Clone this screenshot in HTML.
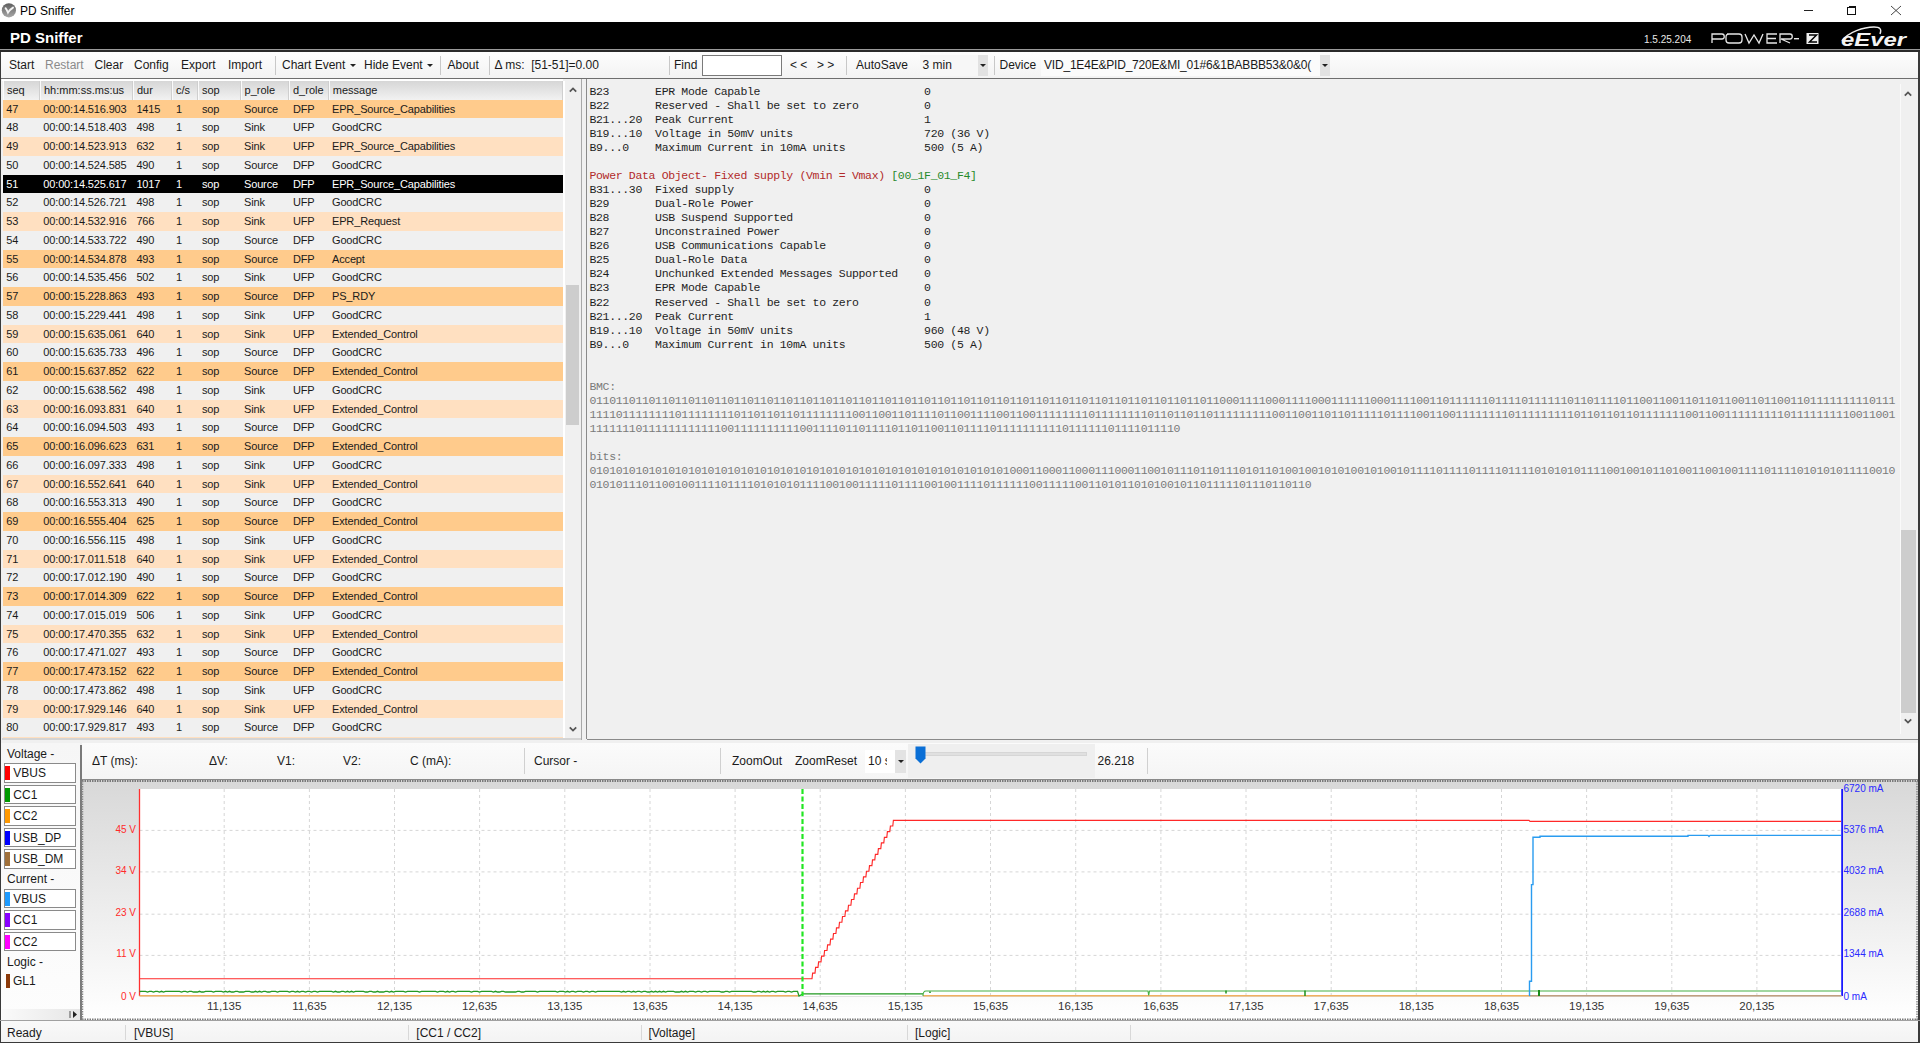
<!DOCTYPE html>
<html><head><meta charset="utf-8"><title>PD Sniffer</title>
<style>
*{margin:0;padding:0;box-sizing:border-box}
html,body{width:1920px;height:1043px;overflow:hidden;background:#f0f0f0;font-family:"Liberation Sans",sans-serif;color:#000}
.abs{position:absolute}
.t{position:absolute;white-space:pre;line-height:1}
#titlebar{position:absolute;left:0;top:0;width:1920px;height:22px;background:#fff}
#hdr{position:absolute;left:0;top:22px;width:1920px;height:27px;background:#000}
#tb{position:absolute;left:1px;top:52px;width:1917px;height:26px;background:linear-gradient(#fdfdfd,#f3f3f3)}
.tbt{position:absolute;top:58px;font-size:12px;line-height:14px;white-space:pre;color:#1a1a1a}
.sep{position:absolute;width:1px;background:#c8c8c8}
.row{position:absolute;left:3px;width:560px;height:18.75px}
.c{position:absolute;top:0;font-size:11px;line-height:18.75px;white-space:pre;color:#1a1a1a;letter-spacing:-0.15px}
.hc{position:absolute;top:81px;height:18.5px;background:linear-gradient(#d6d6d6,#f2f2f2);font-size:11px;line-height:18px;color:#1a1a1a;padding-left:3px;white-space:pre}
.mono{position:absolute;left:589.5px;font-family:"Liberation Mono",monospace;font-size:11.5px;letter-spacing:-0.34px;line-height:14.05px;white-space:pre;color:#1e1e1e}
.lg{position:absolute;left:4px;width:72px;height:19.5px;border:1px solid #8a8a8a;background:#fff}
.lgb{position:absolute;left:1.5px;top:2.5px;width:4.5px;height:13.5px}
.lgt{position:absolute;left:9px;top:0;font-size:12px;line-height:17.5px;color:#1a1a1a}
.lgh{position:absolute;left:7px;font-size:12px;line-height:14px;color:#1a1a1a}
.ctb{position:absolute;top:754px;font-size:12px;line-height:14px;white-space:pre;color:#1a1a1a}
.st{position:absolute;top:1026px;font-size:12px;line-height:14px;white-space:pre;color:#1a1a1a}
</style></head><body>

<div id="titlebar"></div>
<svg class="abs" style="left:0;top:0" width="20" height="20"><defs><linearGradient id="ig" x1="0" y1="0" x2="0" y2="1"><stop offset="0" stop-color="#5e5e5e"/><stop offset="1" stop-color="#a8a8a8"/></linearGradient></defs><circle cx="8.9" cy="10.3" r="7.1" fill="url(#ig)"/><path d="M5.6 8.2Q6.5 9 8 12.6Q10 9.5 13 7.6" fill="none" stroke="#f4f4f4" stroke-width="1.9" stroke-linecap="round"/></svg>
<div class="t" style="left:20px;top:5px;font-size:12px;color:#000">PD Sniffer</div>
<div class="abs" style="left:1804px;top:10px;width:9px;height:1px;background:#222"></div>
<div class="abs" style="left:1847px;top:7px;width:8.5px;height:8px;border:1.2px solid #111"></div>
<div class="abs" style="left:1849px;top:6px;width:7.2px;height:8px;border-top:1.2px solid #111;border-right:1.2px solid #111"></div>
<svg class="abs" style="left:1890px;top:5px" width="12" height="11"><path d="M1 1L11 10M11 1L1 10" stroke="#333" stroke-width="0.9"/></svg>
<div id="hdr"></div>
<div class="abs" style="left:0;top:49px;width:1920px;height:1px;background:#9a9a9a"></div>
<div class="abs" style="left:0;top:50px;width:1920px;height:2px;background:#2a2a2a"></div>
<div class="t" style="left:10px;top:29.5px;font-size:15px;font-weight:bold;color:#fff">PD Sniffer</div>
<div class="t" style="left:1644px;top:35px;font-size:10px;color:#e8e8e8">1.5.25.204</div>
<svg class="abs" style="left:1711px;top:32px" width="110" height="13" viewBox="0 0 110 13">
<g fill="none" stroke="#e6e6e6" stroke-width="1.3">
<path d="M1 11V2h10c3 0 3 5 0 5H1"/>
<path d="M16 2h12c2 0 3 1 3 3v3c0 2-1 3-3 3H18c-2 0-3-1-3-3V5c0-2 1-3 3-3z"/>
<path d="M34 2l4 9l5-8l5 8l4-9"/>
<path d="M66 2H56v9h10M56 6.5h9"/>
<path d="M69 11V2h10c3 0 3 5 0 5h-9l9 4"/>
</g>
<rect x="83" y="6" width="5" height="1.4" fill="#e6e6e6"/>
<rect x="95.5" y="1" width="12" height="11" fill="#f0f0f0"/>
<path d="M98 3h7.5l-7 7h7.5" fill="none" stroke="#000" stroke-width="1.5"/>
</svg>
<svg class="abs" style="left:1840px;top:25px" width="72" height="24" viewBox="0 0 72 24">
<path d="M2 16C8 7 24 2 34 2C40 2 42 4 40 9" fill="none" stroke="#eee" stroke-width="1.4"/>
<text x="1" y="21" font-family="Liberation Sans" font-style="italic" font-weight="bold" font-size="18" fill="#f4f4f4" textLength="65" lengthAdjust="spacingAndGlyphs">eEver</text>
</svg>
<div class="abs" style="left:0;top:52px;width:1px;height:991px;background:#3a3a3a"></div>
<div class="abs" style="left:1918px;top:52px;width:2px;height:991px;background:#3a3a3a"></div>
<div id="tb"></div>
<div class="abs" style="left:1px;top:78px;width:1917px;height:1px;background:#6e6e6e"></div>
<div class="tbt" style="left:9px;color:#1a1a1a;">Start</div>
<div class="tbt" style="left:45px;color:#8a8a8a;">Restart</div>
<div class="tbt" style="left:94.5px;color:#1a1a1a;">Clear</div>
<div class="tbt" style="left:134px;color:#1a1a1a;">Config</div>
<div class="tbt" style="left:181px;color:#1a1a1a;">Export</div>
<div class="tbt" style="left:228px;color:#1a1a1a;">Import</div>
<div class="tbt" style="left:282px;color:#1a1a1a;">Chart Event</div>
<div class="tbt" style="left:364px;color:#1a1a1a;">Hide Event</div>
<div class="tbt" style="left:447.5px;color:#1a1a1a;">About</div>
<div class="tbt" style="left:494.5px;color:#1a1a1a;">Δ ms:  [51-51]=0.00</div>
<div class="tbt" style="left:674px;color:#1a1a1a;">Find</div>
<div class="tbt" style="left:790px;color:#1a1a1a;">&lt; &lt;</div>
<div class="tbt" style="left:817px;color:#1a1a1a;">&gt; &gt;</div>
<div class="tbt" style="left:856px;color:#1a1a1a;">AutoSave</div>
<div class="tbt" style="left:922.5px;color:#1a1a1a;">3 min</div>
<div class="tbt" style="left:999.5px;color:#1a1a1a;">Device</div>
<div class="tbt" style="left:1044px;color:#1a1a1a; letter-spacing:-0.2px;">VID_1E4E&amp;PID_720E&amp;MI_01#6&amp;1BABBB53&amp;0&amp;0(</div>
<div class="sep" style="left:275px;top:56px;height:19px"></div>
<div class="sep" style="left:440px;top:56px;height:19px"></div>
<div class="sep" style="left:489px;top:56px;height:19px"></div>
<div class="sep" style="left:669px;top:56px;height:19px"></div>
<div class="sep" style="left:845.5px;top:56px;height:19px"></div>
<div class="sep" style="left:993.5px;top:56px;height:19px"></div>
<div class="abs" style="left:350px;top:64px;width:0;height:0;border-left:3px solid transparent;border-right:3px solid transparent;border-top:3px solid #222"></div>
<div class="abs" style="left:427px;top:64px;width:0;height:0;border-left:3px solid transparent;border-right:3px solid transparent;border-top:3px solid #222"></div>
<div class="abs" style="left:980px;top:64px;width:0;height:0;border-left:3px solid transparent;border-right:3px solid transparent;border-top:3px solid #222"></div>
<div class="abs" style="left:1322px;top:64px;width:0;height:0;border-left:3px solid transparent;border-right:3px solid transparent;border-top:3px solid #222"></div>
<div class="abs" style="left:702px;top:55px;width:80px;height:21px;background:#fff;border:1px solid #7a7a7a"></div>
<div class="abs" style="left:919.5px;top:55px;width:68px;height:21px;background:#f7f7f7"></div>
<div class="tbt" style="left:922.5px;">3 min</div>
<div class="abs" style="left:978px;top:55px;width:10px;height:21px;background:#e2e2e2"></div>
<div class="abs" style="left:980px;top:64px;width:0;height:0;border-left:3px solid transparent;border-right:3px solid transparent;border-top:3px solid #222"></div>
<div class="abs" style="left:1041px;top:55px;width:280px;height:21px;background:#fbfbfb"></div>
<div class="tbt" style="left:1044px;letter-spacing:-0.2px">VID_1E4E&amp;PID_720E&amp;MI_01#6&amp;1BABBB53&amp;0&amp;0(</div>
<div class="abs" style="left:1320px;top:55px;width:10px;height:21px;background:#e2e2e2"></div>
<div class="abs" style="left:1322px;top:64px;width:0;height:0;border-left:3px solid transparent;border-right:3px solid transparent;border-top:3px solid #222"></div>
<div class="abs" style="left:2px;top:79px;width:580px;height:661px;background:#f0f0f0"></div>
<div class="abs" style="left:2px;top:79px;width:561px;height:2px;background:#fff"></div>
<div class="hc" style="left:3px;width:37px;border-left:1px solid #fafafa;border-right:1px solid #cfcfcf">seq</div>
<div class="hc" style="left:40px;width:93px;border-left:1px solid #fafafa;border-right:1px solid #cfcfcf">hh:mm:ss.ms:us</div>
<div class="hc" style="left:133px;width:39px;border-left:1px solid #fafafa;border-right:1px solid #cfcfcf">dur</div>
<div class="hc" style="left:172px;width:26px;border-left:1px solid #fafafa;border-right:1px solid #cfcfcf">c/s</div>
<div class="hc" style="left:198px;width:42.599999999999994px;border-left:1px solid #fafafa;border-right:1px solid #cfcfcf">sop</div>
<div class="hc" style="left:240.6px;width:48.400000000000006px;border-left:1px solid #fafafa;border-right:1px solid #cfcfcf">p_role</div>
<div class="hc" style="left:289px;width:39.75px;border-left:1px solid #fafafa;border-right:1px solid #cfcfcf">d_role</div>
<div class="hc" style="left:328.75px;width:234.25px;border-left:1px solid #fafafa;border-right:1px solid #cfcfcf">message</div>
<div class="row" style="top:99.5px;height:18.75px;background:#ffcb8c;overflow:hidden">
<div class="c" style="left:3.3px;color:#1a1a1a">47</div>
<div class="c" style="left:40.3px;color:#1a1a1a">00:00:14.516.903</div>
<div class="c" style="left:133.4px;color:#1a1a1a">1415</div>
<div class="c" style="left:173px;color:#1a1a1a">1</div>
<div class="c" style="left:199px;color:#1a1a1a">sop</div>
<div class="c" style="left:241px;color:#1a1a1a">Source</div>
<div class="c" style="left:290px;color:#1a1a1a">DFP</div>
<div class="c" style="left:329px;color:#1a1a1a">EPR_Source_Capabilities</div>
</div>
<div class="row" style="top:118.25px;height:18.75px;background:#f0f0f0;overflow:hidden">
<div class="c" style="left:3.3px;color:#1a1a1a">48</div>
<div class="c" style="left:40.3px;color:#1a1a1a">00:00:14.518.403</div>
<div class="c" style="left:133.4px;color:#1a1a1a">498</div>
<div class="c" style="left:173px;color:#1a1a1a">1</div>
<div class="c" style="left:199px;color:#1a1a1a">sop</div>
<div class="c" style="left:241px;color:#1a1a1a">Sink</div>
<div class="c" style="left:290px;color:#1a1a1a">UFP</div>
<div class="c" style="left:329px;color:#1a1a1a">GoodCRC</div>
</div>
<div class="row" style="top:137.0px;height:18.75px;background:#ffe0c1;overflow:hidden">
<div class="c" style="left:3.3px;color:#1a1a1a">49</div>
<div class="c" style="left:40.3px;color:#1a1a1a">00:00:14.523.913</div>
<div class="c" style="left:133.4px;color:#1a1a1a">632</div>
<div class="c" style="left:173px;color:#1a1a1a">1</div>
<div class="c" style="left:199px;color:#1a1a1a">sop</div>
<div class="c" style="left:241px;color:#1a1a1a">Sink</div>
<div class="c" style="left:290px;color:#1a1a1a">UFP</div>
<div class="c" style="left:329px;color:#1a1a1a">EPR_Source_Capabilities</div>
</div>
<div class="row" style="top:155.75px;height:18.75px;background:#f0f0f0;overflow:hidden">
<div class="c" style="left:3.3px;color:#1a1a1a">50</div>
<div class="c" style="left:40.3px;color:#1a1a1a">00:00:14.524.585</div>
<div class="c" style="left:133.4px;color:#1a1a1a">490</div>
<div class="c" style="left:173px;color:#1a1a1a">1</div>
<div class="c" style="left:199px;color:#1a1a1a">sop</div>
<div class="c" style="left:241px;color:#1a1a1a">Source</div>
<div class="c" style="left:290px;color:#1a1a1a">DFP</div>
<div class="c" style="left:329px;color:#1a1a1a">GoodCRC</div>
</div>
<div class="row" style="top:174.5px;height:18.75px;background:#000;overflow:hidden">
<div class="c" style="left:3.3px;color:#fff">51</div>
<div class="c" style="left:40.3px;color:#fff">00:00:14.525.617</div>
<div class="c" style="left:133.4px;color:#fff">1017</div>
<div class="c" style="left:173px;color:#fff">1</div>
<div class="c" style="left:199px;color:#fff">sop</div>
<div class="c" style="left:241px;color:#fff">Source</div>
<div class="c" style="left:290px;color:#fff">DFP</div>
<div class="c" style="left:329px;color:#fff">EPR_Source_Capabilities</div>
</div>
<div class="row" style="top:193.25px;height:18.75px;background:#f0f0f0;overflow:hidden">
<div class="c" style="left:3.3px;color:#1a1a1a">52</div>
<div class="c" style="left:40.3px;color:#1a1a1a">00:00:14.526.721</div>
<div class="c" style="left:133.4px;color:#1a1a1a">498</div>
<div class="c" style="left:173px;color:#1a1a1a">1</div>
<div class="c" style="left:199px;color:#1a1a1a">sop</div>
<div class="c" style="left:241px;color:#1a1a1a">Sink</div>
<div class="c" style="left:290px;color:#1a1a1a">UFP</div>
<div class="c" style="left:329px;color:#1a1a1a">GoodCRC</div>
</div>
<div class="row" style="top:212.0px;height:18.75px;background:#ffe0c1;overflow:hidden">
<div class="c" style="left:3.3px;color:#1a1a1a">53</div>
<div class="c" style="left:40.3px;color:#1a1a1a">00:00:14.532.916</div>
<div class="c" style="left:133.4px;color:#1a1a1a">766</div>
<div class="c" style="left:173px;color:#1a1a1a">1</div>
<div class="c" style="left:199px;color:#1a1a1a">sop</div>
<div class="c" style="left:241px;color:#1a1a1a">Sink</div>
<div class="c" style="left:290px;color:#1a1a1a">UFP</div>
<div class="c" style="left:329px;color:#1a1a1a">EPR_Request</div>
</div>
<div class="row" style="top:230.75px;height:18.75px;background:#f0f0f0;overflow:hidden">
<div class="c" style="left:3.3px;color:#1a1a1a">54</div>
<div class="c" style="left:40.3px;color:#1a1a1a">00:00:14.533.722</div>
<div class="c" style="left:133.4px;color:#1a1a1a">490</div>
<div class="c" style="left:173px;color:#1a1a1a">1</div>
<div class="c" style="left:199px;color:#1a1a1a">sop</div>
<div class="c" style="left:241px;color:#1a1a1a">Source</div>
<div class="c" style="left:290px;color:#1a1a1a">DFP</div>
<div class="c" style="left:329px;color:#1a1a1a">GoodCRC</div>
</div>
<div class="row" style="top:249.5px;height:18.75px;background:#ffcb8c;overflow:hidden">
<div class="c" style="left:3.3px;color:#1a1a1a">55</div>
<div class="c" style="left:40.3px;color:#1a1a1a">00:00:14.534.878</div>
<div class="c" style="left:133.4px;color:#1a1a1a">493</div>
<div class="c" style="left:173px;color:#1a1a1a">1</div>
<div class="c" style="left:199px;color:#1a1a1a">sop</div>
<div class="c" style="left:241px;color:#1a1a1a">Source</div>
<div class="c" style="left:290px;color:#1a1a1a">DFP</div>
<div class="c" style="left:329px;color:#1a1a1a">Accept</div>
</div>
<div class="row" style="top:268.25px;height:18.75px;background:#f0f0f0;overflow:hidden">
<div class="c" style="left:3.3px;color:#1a1a1a">56</div>
<div class="c" style="left:40.3px;color:#1a1a1a">00:00:14.535.456</div>
<div class="c" style="left:133.4px;color:#1a1a1a">502</div>
<div class="c" style="left:173px;color:#1a1a1a">1</div>
<div class="c" style="left:199px;color:#1a1a1a">sop</div>
<div class="c" style="left:241px;color:#1a1a1a">Sink</div>
<div class="c" style="left:290px;color:#1a1a1a">UFP</div>
<div class="c" style="left:329px;color:#1a1a1a">GoodCRC</div>
</div>
<div class="row" style="top:287.0px;height:18.75px;background:#ffcb8c;overflow:hidden">
<div class="c" style="left:3.3px;color:#1a1a1a">57</div>
<div class="c" style="left:40.3px;color:#1a1a1a">00:00:15.228.863</div>
<div class="c" style="left:133.4px;color:#1a1a1a">493</div>
<div class="c" style="left:173px;color:#1a1a1a">1</div>
<div class="c" style="left:199px;color:#1a1a1a">sop</div>
<div class="c" style="left:241px;color:#1a1a1a">Source</div>
<div class="c" style="left:290px;color:#1a1a1a">DFP</div>
<div class="c" style="left:329px;color:#1a1a1a">PS_RDY</div>
</div>
<div class="row" style="top:305.75px;height:18.75px;background:#f0f0f0;overflow:hidden">
<div class="c" style="left:3.3px;color:#1a1a1a">58</div>
<div class="c" style="left:40.3px;color:#1a1a1a">00:00:15.229.441</div>
<div class="c" style="left:133.4px;color:#1a1a1a">498</div>
<div class="c" style="left:173px;color:#1a1a1a">1</div>
<div class="c" style="left:199px;color:#1a1a1a">sop</div>
<div class="c" style="left:241px;color:#1a1a1a">Sink</div>
<div class="c" style="left:290px;color:#1a1a1a">UFP</div>
<div class="c" style="left:329px;color:#1a1a1a">GoodCRC</div>
</div>
<div class="row" style="top:324.5px;height:18.75px;background:#ffe0c1;overflow:hidden">
<div class="c" style="left:3.3px;color:#1a1a1a">59</div>
<div class="c" style="left:40.3px;color:#1a1a1a">00:00:15.635.061</div>
<div class="c" style="left:133.4px;color:#1a1a1a">640</div>
<div class="c" style="left:173px;color:#1a1a1a">1</div>
<div class="c" style="left:199px;color:#1a1a1a">sop</div>
<div class="c" style="left:241px;color:#1a1a1a">Sink</div>
<div class="c" style="left:290px;color:#1a1a1a">UFP</div>
<div class="c" style="left:329px;color:#1a1a1a">Extended_Control</div>
</div>
<div class="row" style="top:343.25px;height:18.75px;background:#f0f0f0;overflow:hidden">
<div class="c" style="left:3.3px;color:#1a1a1a">60</div>
<div class="c" style="left:40.3px;color:#1a1a1a">00:00:15.635.733</div>
<div class="c" style="left:133.4px;color:#1a1a1a">496</div>
<div class="c" style="left:173px;color:#1a1a1a">1</div>
<div class="c" style="left:199px;color:#1a1a1a">sop</div>
<div class="c" style="left:241px;color:#1a1a1a">Source</div>
<div class="c" style="left:290px;color:#1a1a1a">DFP</div>
<div class="c" style="left:329px;color:#1a1a1a">GoodCRC</div>
</div>
<div class="row" style="top:362.0px;height:18.75px;background:#ffcb8c;overflow:hidden">
<div class="c" style="left:3.3px;color:#1a1a1a">61</div>
<div class="c" style="left:40.3px;color:#1a1a1a">00:00:15.637.852</div>
<div class="c" style="left:133.4px;color:#1a1a1a">622</div>
<div class="c" style="left:173px;color:#1a1a1a">1</div>
<div class="c" style="left:199px;color:#1a1a1a">sop</div>
<div class="c" style="left:241px;color:#1a1a1a">Source</div>
<div class="c" style="left:290px;color:#1a1a1a">DFP</div>
<div class="c" style="left:329px;color:#1a1a1a">Extended_Control</div>
</div>
<div class="row" style="top:380.75px;height:18.75px;background:#f0f0f0;overflow:hidden">
<div class="c" style="left:3.3px;color:#1a1a1a">62</div>
<div class="c" style="left:40.3px;color:#1a1a1a">00:00:15.638.562</div>
<div class="c" style="left:133.4px;color:#1a1a1a">498</div>
<div class="c" style="left:173px;color:#1a1a1a">1</div>
<div class="c" style="left:199px;color:#1a1a1a">sop</div>
<div class="c" style="left:241px;color:#1a1a1a">Sink</div>
<div class="c" style="left:290px;color:#1a1a1a">UFP</div>
<div class="c" style="left:329px;color:#1a1a1a">GoodCRC</div>
</div>
<div class="row" style="top:399.5px;height:18.75px;background:#ffe0c1;overflow:hidden">
<div class="c" style="left:3.3px;color:#1a1a1a">63</div>
<div class="c" style="left:40.3px;color:#1a1a1a">00:00:16.093.831</div>
<div class="c" style="left:133.4px;color:#1a1a1a">640</div>
<div class="c" style="left:173px;color:#1a1a1a">1</div>
<div class="c" style="left:199px;color:#1a1a1a">sop</div>
<div class="c" style="left:241px;color:#1a1a1a">Sink</div>
<div class="c" style="left:290px;color:#1a1a1a">UFP</div>
<div class="c" style="left:329px;color:#1a1a1a">Extended_Control</div>
</div>
<div class="row" style="top:418.25px;height:18.75px;background:#f0f0f0;overflow:hidden">
<div class="c" style="left:3.3px;color:#1a1a1a">64</div>
<div class="c" style="left:40.3px;color:#1a1a1a">00:00:16.094.503</div>
<div class="c" style="left:133.4px;color:#1a1a1a">493</div>
<div class="c" style="left:173px;color:#1a1a1a">1</div>
<div class="c" style="left:199px;color:#1a1a1a">sop</div>
<div class="c" style="left:241px;color:#1a1a1a">Source</div>
<div class="c" style="left:290px;color:#1a1a1a">DFP</div>
<div class="c" style="left:329px;color:#1a1a1a">GoodCRC</div>
</div>
<div class="row" style="top:437.0px;height:18.75px;background:#ffcb8c;overflow:hidden">
<div class="c" style="left:3.3px;color:#1a1a1a">65</div>
<div class="c" style="left:40.3px;color:#1a1a1a">00:00:16.096.623</div>
<div class="c" style="left:133.4px;color:#1a1a1a">631</div>
<div class="c" style="left:173px;color:#1a1a1a">1</div>
<div class="c" style="left:199px;color:#1a1a1a">sop</div>
<div class="c" style="left:241px;color:#1a1a1a">Source</div>
<div class="c" style="left:290px;color:#1a1a1a">DFP</div>
<div class="c" style="left:329px;color:#1a1a1a">Extended_Control</div>
</div>
<div class="row" style="top:455.75px;height:18.75px;background:#f0f0f0;overflow:hidden">
<div class="c" style="left:3.3px;color:#1a1a1a">66</div>
<div class="c" style="left:40.3px;color:#1a1a1a">00:00:16.097.333</div>
<div class="c" style="left:133.4px;color:#1a1a1a">498</div>
<div class="c" style="left:173px;color:#1a1a1a">1</div>
<div class="c" style="left:199px;color:#1a1a1a">sop</div>
<div class="c" style="left:241px;color:#1a1a1a">Sink</div>
<div class="c" style="left:290px;color:#1a1a1a">UFP</div>
<div class="c" style="left:329px;color:#1a1a1a">GoodCRC</div>
</div>
<div class="row" style="top:474.5px;height:18.75px;background:#ffe0c1;overflow:hidden">
<div class="c" style="left:3.3px;color:#1a1a1a">67</div>
<div class="c" style="left:40.3px;color:#1a1a1a">00:00:16.552.641</div>
<div class="c" style="left:133.4px;color:#1a1a1a">640</div>
<div class="c" style="left:173px;color:#1a1a1a">1</div>
<div class="c" style="left:199px;color:#1a1a1a">sop</div>
<div class="c" style="left:241px;color:#1a1a1a">Sink</div>
<div class="c" style="left:290px;color:#1a1a1a">UFP</div>
<div class="c" style="left:329px;color:#1a1a1a">Extended_Control</div>
</div>
<div class="row" style="top:493.25px;height:18.75px;background:#f0f0f0;overflow:hidden">
<div class="c" style="left:3.3px;color:#1a1a1a">68</div>
<div class="c" style="left:40.3px;color:#1a1a1a">00:00:16.553.313</div>
<div class="c" style="left:133.4px;color:#1a1a1a">490</div>
<div class="c" style="left:173px;color:#1a1a1a">1</div>
<div class="c" style="left:199px;color:#1a1a1a">sop</div>
<div class="c" style="left:241px;color:#1a1a1a">Source</div>
<div class="c" style="left:290px;color:#1a1a1a">DFP</div>
<div class="c" style="left:329px;color:#1a1a1a">GoodCRC</div>
</div>
<div class="row" style="top:512.0px;height:18.75px;background:#ffcb8c;overflow:hidden">
<div class="c" style="left:3.3px;color:#1a1a1a">69</div>
<div class="c" style="left:40.3px;color:#1a1a1a">00:00:16.555.404</div>
<div class="c" style="left:133.4px;color:#1a1a1a">625</div>
<div class="c" style="left:173px;color:#1a1a1a">1</div>
<div class="c" style="left:199px;color:#1a1a1a">sop</div>
<div class="c" style="left:241px;color:#1a1a1a">Source</div>
<div class="c" style="left:290px;color:#1a1a1a">DFP</div>
<div class="c" style="left:329px;color:#1a1a1a">Extended_Control</div>
</div>
<div class="row" style="top:530.75px;height:18.75px;background:#f0f0f0;overflow:hidden">
<div class="c" style="left:3.3px;color:#1a1a1a">70</div>
<div class="c" style="left:40.3px;color:#1a1a1a">00:00:16.556.115</div>
<div class="c" style="left:133.4px;color:#1a1a1a">498</div>
<div class="c" style="left:173px;color:#1a1a1a">1</div>
<div class="c" style="left:199px;color:#1a1a1a">sop</div>
<div class="c" style="left:241px;color:#1a1a1a">Sink</div>
<div class="c" style="left:290px;color:#1a1a1a">UFP</div>
<div class="c" style="left:329px;color:#1a1a1a">GoodCRC</div>
</div>
<div class="row" style="top:549.5px;height:18.75px;background:#ffe0c1;overflow:hidden">
<div class="c" style="left:3.3px;color:#1a1a1a">71</div>
<div class="c" style="left:40.3px;color:#1a1a1a">00:00:17.011.518</div>
<div class="c" style="left:133.4px;color:#1a1a1a">640</div>
<div class="c" style="left:173px;color:#1a1a1a">1</div>
<div class="c" style="left:199px;color:#1a1a1a">sop</div>
<div class="c" style="left:241px;color:#1a1a1a">Sink</div>
<div class="c" style="left:290px;color:#1a1a1a">UFP</div>
<div class="c" style="left:329px;color:#1a1a1a">Extended_Control</div>
</div>
<div class="row" style="top:568.25px;height:18.75px;background:#f0f0f0;overflow:hidden">
<div class="c" style="left:3.3px;color:#1a1a1a">72</div>
<div class="c" style="left:40.3px;color:#1a1a1a">00:00:17.012.190</div>
<div class="c" style="left:133.4px;color:#1a1a1a">490</div>
<div class="c" style="left:173px;color:#1a1a1a">1</div>
<div class="c" style="left:199px;color:#1a1a1a">sop</div>
<div class="c" style="left:241px;color:#1a1a1a">Source</div>
<div class="c" style="left:290px;color:#1a1a1a">DFP</div>
<div class="c" style="left:329px;color:#1a1a1a">GoodCRC</div>
</div>
<div class="row" style="top:587.0px;height:18.75px;background:#ffcb8c;overflow:hidden">
<div class="c" style="left:3.3px;color:#1a1a1a">73</div>
<div class="c" style="left:40.3px;color:#1a1a1a">00:00:17.014.309</div>
<div class="c" style="left:133.4px;color:#1a1a1a">622</div>
<div class="c" style="left:173px;color:#1a1a1a">1</div>
<div class="c" style="left:199px;color:#1a1a1a">sop</div>
<div class="c" style="left:241px;color:#1a1a1a">Source</div>
<div class="c" style="left:290px;color:#1a1a1a">DFP</div>
<div class="c" style="left:329px;color:#1a1a1a">Extended_Control</div>
</div>
<div class="row" style="top:605.75px;height:18.75px;background:#f0f0f0;overflow:hidden">
<div class="c" style="left:3.3px;color:#1a1a1a">74</div>
<div class="c" style="left:40.3px;color:#1a1a1a">00:00:17.015.019</div>
<div class="c" style="left:133.4px;color:#1a1a1a">506</div>
<div class="c" style="left:173px;color:#1a1a1a">1</div>
<div class="c" style="left:199px;color:#1a1a1a">sop</div>
<div class="c" style="left:241px;color:#1a1a1a">Sink</div>
<div class="c" style="left:290px;color:#1a1a1a">UFP</div>
<div class="c" style="left:329px;color:#1a1a1a">GoodCRC</div>
</div>
<div class="row" style="top:624.5px;height:18.75px;background:#ffe0c1;overflow:hidden">
<div class="c" style="left:3.3px;color:#1a1a1a">75</div>
<div class="c" style="left:40.3px;color:#1a1a1a">00:00:17.470.355</div>
<div class="c" style="left:133.4px;color:#1a1a1a">632</div>
<div class="c" style="left:173px;color:#1a1a1a">1</div>
<div class="c" style="left:199px;color:#1a1a1a">sop</div>
<div class="c" style="left:241px;color:#1a1a1a">Sink</div>
<div class="c" style="left:290px;color:#1a1a1a">UFP</div>
<div class="c" style="left:329px;color:#1a1a1a">Extended_Control</div>
</div>
<div class="row" style="top:643.25px;height:18.75px;background:#f0f0f0;overflow:hidden">
<div class="c" style="left:3.3px;color:#1a1a1a">76</div>
<div class="c" style="left:40.3px;color:#1a1a1a">00:00:17.471.027</div>
<div class="c" style="left:133.4px;color:#1a1a1a">493</div>
<div class="c" style="left:173px;color:#1a1a1a">1</div>
<div class="c" style="left:199px;color:#1a1a1a">sop</div>
<div class="c" style="left:241px;color:#1a1a1a">Source</div>
<div class="c" style="left:290px;color:#1a1a1a">DFP</div>
<div class="c" style="left:329px;color:#1a1a1a">GoodCRC</div>
</div>
<div class="row" style="top:662.0px;height:18.75px;background:#ffcb8c;overflow:hidden">
<div class="c" style="left:3.3px;color:#1a1a1a">77</div>
<div class="c" style="left:40.3px;color:#1a1a1a">00:00:17.473.152</div>
<div class="c" style="left:133.4px;color:#1a1a1a">622</div>
<div class="c" style="left:173px;color:#1a1a1a">1</div>
<div class="c" style="left:199px;color:#1a1a1a">sop</div>
<div class="c" style="left:241px;color:#1a1a1a">Source</div>
<div class="c" style="left:290px;color:#1a1a1a">DFP</div>
<div class="c" style="left:329px;color:#1a1a1a">Extended_Control</div>
</div>
<div class="row" style="top:680.75px;height:18.75px;background:#f0f0f0;overflow:hidden">
<div class="c" style="left:3.3px;color:#1a1a1a">78</div>
<div class="c" style="left:40.3px;color:#1a1a1a">00:00:17.473.862</div>
<div class="c" style="left:133.4px;color:#1a1a1a">498</div>
<div class="c" style="left:173px;color:#1a1a1a">1</div>
<div class="c" style="left:199px;color:#1a1a1a">sop</div>
<div class="c" style="left:241px;color:#1a1a1a">Sink</div>
<div class="c" style="left:290px;color:#1a1a1a">UFP</div>
<div class="c" style="left:329px;color:#1a1a1a">GoodCRC</div>
</div>
<div class="row" style="top:699.5px;height:18.75px;background:#ffe0c1;overflow:hidden">
<div class="c" style="left:3.3px;color:#1a1a1a">79</div>
<div class="c" style="left:40.3px;color:#1a1a1a">00:00:17.929.146</div>
<div class="c" style="left:133.4px;color:#1a1a1a">640</div>
<div class="c" style="left:173px;color:#1a1a1a">1</div>
<div class="c" style="left:199px;color:#1a1a1a">sop</div>
<div class="c" style="left:241px;color:#1a1a1a">Sink</div>
<div class="c" style="left:290px;color:#1a1a1a">UFP</div>
<div class="c" style="left:329px;color:#1a1a1a">Extended_Control</div>
</div>
<div class="row" style="top:718.25px;height:18.75px;background:#f0f0f0;overflow:hidden">
<div class="c" style="left:3.3px;color:#1a1a1a">80</div>
<div class="c" style="left:40.3px;color:#1a1a1a">00:00:17.929.817</div>
<div class="c" style="left:133.4px;color:#1a1a1a">493</div>
<div class="c" style="left:173px;color:#1a1a1a">1</div>
<div class="c" style="left:199px;color:#1a1a1a">sop</div>
<div class="c" style="left:241px;color:#1a1a1a">Source</div>
<div class="c" style="left:290px;color:#1a1a1a">DFP</div>
<div class="c" style="left:329px;color:#1a1a1a">GoodCRC</div>
</div>
<div class="row" style="top:737.0px;height:1.5px;background:#ffe0c1;overflow:hidden">
<div class="c" style="left:3.3px;color:#1a1a1a">81</div>
<div class="c" style="left:40.3px;color:#1a1a1a">00:00:17.931.938</div>
<div class="c" style="left:133.4px;color:#1a1a1a">622</div>
<div class="c" style="left:173px;color:#1a1a1a">1</div>
<div class="c" style="left:199px;color:#1a1a1a">sop</div>
<div class="c" style="left:241px;color:#1a1a1a">Sink</div>
<div class="c" style="left:290px;color:#1a1a1a">UFP</div>
<div class="c" style="left:329px;color:#1a1a1a">Extended_Control</div>
</div>
<div class="abs" style="left:2px;top:738px;width:580px;height:2px;background:#d4d4d4"></div>
<div class="abs" style="left:563px;top:81px;width:2px;height:657px;background:#fff"></div>
<div class="abs" style="left:566px;top:285px;width:13px;height:140px;background:#cdcdcd"></div>
<svg class="abs" style="left:568px;top:86px" width="10" height="8"><path d="M1.8 5.6L5 2.4L8.2 5.6" fill="none" stroke="#555" stroke-width="1.8"/></svg>
<svg class="abs" style="left:568px;top:725px" width="10" height="8"><path d="M1.8 2.4L5 5.6L8.2 2.4" fill="none" stroke="#555" stroke-width="1.8"/></svg>
<div class="abs" style="left:581px;top:79px;width:1px;height:661px;background:#a8a8a8"></div>
<div class="abs" style="left:586px;top:79px;width:1px;height:660px;background:#8a8a8a"></div>
<div class="abs" style="left:587px;top:739px;width:1331px;height:1px;background:#8a8a8a"></div>
<div class="mono" style="top:84.8px">B23       EPR Mode Capable                         0
B22       Reserved - Shall be set to zero          0
B21...20  Peak Current                             1
B19...10  Voltage in 50mV units                    720 (36 V)
B9...0    Maximum Current in 10mA units            500 (5 A)

<span style="color:#b22a2a">Power Data Object- Fixed supply (Vmin = Vmax) </span><span style="color:#278a2a">[00_1F_01_F4]</span>
B31...30  Fixed supply                             0
B29       Dual-Role Power                          0
B28       USB Suspend Supported                    0
B27       Unconstrained Power                      0
B26       USB Communications Capable               0
B25       Dual-Role Data                           0
B24       Unchunked Extended Messages Supported    0
B23       EPR Mode Capable                         0
B22       Reserved - Shall be set to zero          0
B21...20  Peak Current                             1
B19...10  Voltage in 50mV units                    960 (48 V)
B9...0    Maximum Current in 10mA units            500 (5 A)</div>
<div class="mono" style="top:379.85px;color:#7a7a7a">BMC:
0110110110110110110110110110110110110110110110110110110110110110110110110110110110110110110110110001111000111100011111100011110011011111101111011111101101111011001100110110110011011001101111111110111
1111011111111011111111011011011011111111001100110111101100111100110011111111011111111011011011011111111100110011011011111011110011001111111101111111110110110110111111100110011111111101111111110011001
111111101111111111110011111111110011110110111101101100110111101111111111011111101111011110

bits:
0101010101010101010101010101010101010101010101010101010101010101000110001100011100011001011101101110101101001001010100101001011110111101111011110101010111100100101101001100100111101111010101011110010
01010111011001001111011110101010111100100111110111100100111101111110011111001101011010100101101111101110110110</div>
<div class="abs" style="left:1900px;top:84px;width:1px;height:650px;background:#fafafa"></div>
<div class="abs" style="left:1901px;top:530px;width:14.5px;height:183px;background:#cdcdcd"></div>
<svg class="abs" style="left:1903px;top:90px" width="10" height="8"><path d="M1.8 5.6L5 2.4L8.2 5.6" fill="none" stroke="#555" stroke-width="1.8"/></svg>
<svg class="abs" style="left:1903px;top:717px" width="10" height="8"><path d="M1.8 2.4L5 5.6L8.2 2.4" fill="none" stroke="#555" stroke-width="1.8"/></svg>
<div class="abs" style="left:1px;top:743px;width:79px;height:277px;background:linear-gradient(#f6f6f6,#fdfdfd)"></div>
<div class="abs" style="left:2px;top:1009px;width:78px;height:11px;background:linear-gradient(90deg,#fafafa,#e6e6e6)"></div>
<svg class="abs" style="left:69px;top:1010px" width="10" height="9"><path d="M1 1v7" stroke="#555" stroke-width="1"/><path d="M4 1l4 3.5l-4 3.5z" fill="#222"/></svg>
<div class="abs" style="left:80px;top:745px;width:2px;height:275px;background:#7a7a7a"></div>
<div class="lgh" style="top:746.5px">Voltage -</div>
<div class="lgh" style="top:872px">Current -</div>
<div class="lgh" style="top:955px">Logic -</div>
<div class="lg" style="top:763px"><div class="abs" style="left:0.4px;top:2px;width:5px;height:14px;background:#ff0000"></div><div class="abs" style="left:8.3px;top:1px;font-size:12px;line-height:17.5px;color:#1a1a1a">VBUS</div></div>
<div class="lg" style="top:784.6px"><div class="abs" style="left:0.4px;top:2px;width:5px;height:14px;background:#009900"></div><div class="abs" style="left:8.3px;top:1px;font-size:12px;line-height:17.5px;color:#1a1a1a">CC1</div></div>
<div class="lg" style="top:806px"><div class="abs" style="left:0.4px;top:2px;width:5px;height:14px;background:#ff9900"></div><div class="abs" style="left:8.3px;top:1px;font-size:12px;line-height:17.5px;color:#1a1a1a">CC2</div></div>
<div class="lg" style="top:827.5px"><div class="abs" style="left:0.4px;top:2px;width:5px;height:14px;background:#0000ff"></div><div class="abs" style="left:8.3px;top:1px;font-size:12px;line-height:17.5px;color:#1a1a1a">USB_DP</div></div>
<div class="lg" style="top:849px"><div class="abs" style="left:0.4px;top:2px;width:5px;height:14px;background:#a0703a"></div><div class="abs" style="left:8.3px;top:1px;font-size:12px;line-height:17.5px;color:#1a1a1a">USB_DM</div></div>
<div class="lg" style="top:888.5px"><div class="abs" style="left:0.4px;top:2px;width:5px;height:14px;background:#1e9bff"></div><div class="abs" style="left:8.3px;top:1px;font-size:12px;line-height:17.5px;color:#1a1a1a">VBUS</div></div>
<div class="lg" style="top:910px"><div class="abs" style="left:0.4px;top:2px;width:5px;height:14px;background:#8800ff"></div><div class="abs" style="left:8.3px;top:1px;font-size:12px;line-height:17.5px;color:#1a1a1a">CC1</div></div>
<div class="lg" style="top:931.5px"><div class="abs" style="left:0.4px;top:2px;width:5px;height:14px;background:#ff00ff"></div><div class="abs" style="left:8.3px;top:1px;font-size:12px;line-height:17.5px;color:#1a1a1a">CC2</div></div>
<div class="abs" style="left:5.5px;top:974px;width:4.5px;height:13.5px;background:#8b3a0a"></div>
<div class="t" style="left:13px;top:974px;font-size:12px;line-height:14px;color:#1a1a1a">GL1</div>
<div class="abs" style="left:82px;top:743px;width:1836px;height:36px;background:linear-gradient(#fbfbfb,#f5f5f5)"></div>
<div class="ctb" style="left:92px">ΔT (ms):</div>
<div class="ctb" style="left:209px">ΔV:</div>
<div class="ctb" style="left:277px">V1:</div>
<div class="ctb" style="left:343px">V2:</div>
<div class="ctb" style="left:410px">C (mA):</div>
<div class="ctb" style="left:534px">Cursor -</div>
<div class="ctb" style="left:732px">ZoomOut</div>
<div class="ctb" style="left:795px">ZoomReset</div>
<div class="ctb" style="left:1097.5px">26.218</div>
<div class="sep" style="left:523.5px;top:748px;height:26px;background:#d0d0d0"></div>
<div class="sep" style="left:719.5px;top:748px;height:26px;background:#d0d0d0"></div>
<div class="sep" style="left:1147px;top:748px;height:26px;background:#d0d0d0"></div>
<div class="abs" style="left:865px;top:750px;width:30px;height:23px;background:#fff"></div>
<div class="ctb" style="left:868px;width:19px;overflow:hidden">10 s</div>
<div class="abs" style="left:895px;top:750px;width:10.5px;height:23px;background:#e3e3e3"></div>
<div class="abs" style="left:897.5px;top:760px;width:0;height:0;border-left:3px solid transparent;border-right:3px solid transparent;border-top:3px solid #222"></div>
<div class="abs" style="left:907.5px;top:744px;width:187.5px;height:34px;background:#efefef"></div>
<div class="abs" style="left:922px;top:751.5px;width:165px;height:4px;background:#e0e0e0;border:1px solid #d6d6d6"></div>
<svg class="abs" style="left:915px;top:746px" width="11" height="18"><path d="M0.5 0.5h10v12l-5 5l-5-5z" fill="#0a6fd6"/></svg>
<div class="abs" style="left:82px;top:779px;width:1836px;height:1px;background:#8a8a8a"></div>
<svg class="abs" style="left:0;top:0" width="1920" height="1043" viewBox="0 0 1920 1043"><defs><linearGradient id="cg" x1="0" y1="0" x2="0" y2="1"><stop offset="0" stop-color="#d8d8d8"/><stop offset="1" stop-color="#ffffff"/></linearGradient></defs><rect x="82" y="780" width="1836" height="240" fill="url(#cg)"/><rect x="139.5" y="789" width="1702.0" height="207" fill="#fff"/><line x1="82" y1="781" x2="1918" y2="781" stroke="#7a7a7a" stroke-width="2" stroke-dasharray="1.5 1"/><line x1="82" y1="1019.5" x2="1918" y2="1019.5" stroke="#7a7a7a" stroke-width="2" stroke-dasharray="1.5 1"/><line x1="82.5" y1="781" x2="82.5" y2="1020" stroke="#8a8a8a" stroke-width="1.5" stroke-dasharray="1.5 1"/><line x1="1917" y1="781" x2="1917" y2="1020" stroke="#8a8a8a" stroke-width="1.5" stroke-dasharray="1.5 1"/><line x1="224.2" y1="789" x2="224.2" y2="996" stroke="#d6d6d6" stroke-width="1" stroke-dasharray="3 3"/><text x="224.2" y="1010" font-family="Liberation Sans" font-size="11.5" fill="#333" text-anchor="middle">11,135</text><line x1="309.4" y1="789" x2="309.4" y2="996" stroke="#d6d6d6" stroke-width="1" stroke-dasharray="3 3"/><text x="309.4" y="1010" font-family="Liberation Sans" font-size="11.5" fill="#333" text-anchor="middle">11,635</text><line x1="394.5" y1="789" x2="394.5" y2="996" stroke="#d6d6d6" stroke-width="1" stroke-dasharray="3 3"/><text x="394.5" y="1010" font-family="Liberation Sans" font-size="11.5" fill="#333" text-anchor="middle">12,135</text><line x1="479.6" y1="789" x2="479.6" y2="996" stroke="#d6d6d6" stroke-width="1" stroke-dasharray="3 3"/><text x="479.6" y="1010" font-family="Liberation Sans" font-size="11.5" fill="#333" text-anchor="middle">12,635</text><line x1="564.8" y1="789" x2="564.8" y2="996" stroke="#d6d6d6" stroke-width="1" stroke-dasharray="3 3"/><text x="564.8" y="1010" font-family="Liberation Sans" font-size="11.5" fill="#333" text-anchor="middle">13,135</text><line x1="650.0" y1="789" x2="650.0" y2="996" stroke="#d6d6d6" stroke-width="1" stroke-dasharray="3 3"/><text x="650.0" y="1010" font-family="Liberation Sans" font-size="11.5" fill="#333" text-anchor="middle">13,635</text><line x1="735.1" y1="789" x2="735.1" y2="996" stroke="#d6d6d6" stroke-width="1" stroke-dasharray="3 3"/><text x="735.1" y="1010" font-family="Liberation Sans" font-size="11.5" fill="#333" text-anchor="middle">14,135</text><line x1="820.2" y1="789" x2="820.2" y2="996" stroke="#d6d6d6" stroke-width="1" stroke-dasharray="3 3"/><text x="820.2" y="1010" font-family="Liberation Sans" font-size="11.5" fill="#333" text-anchor="middle">14,635</text><line x1="905.4" y1="789" x2="905.4" y2="996" stroke="#d6d6d6" stroke-width="1" stroke-dasharray="3 3"/><text x="905.4" y="1010" font-family="Liberation Sans" font-size="11.5" fill="#333" text-anchor="middle">15,135</text><line x1="990.5" y1="789" x2="990.5" y2="996" stroke="#d6d6d6" stroke-width="1" stroke-dasharray="3 3"/><text x="990.5" y="1010" font-family="Liberation Sans" font-size="11.5" fill="#333" text-anchor="middle">15,635</text><line x1="1075.7" y1="789" x2="1075.7" y2="996" stroke="#d6d6d6" stroke-width="1" stroke-dasharray="3 3"/><text x="1075.7" y="1010" font-family="Liberation Sans" font-size="11.5" fill="#333" text-anchor="middle">16,135</text><line x1="1160.9" y1="789" x2="1160.9" y2="996" stroke="#d6d6d6" stroke-width="1" stroke-dasharray="3 3"/><text x="1160.9" y="1010" font-family="Liberation Sans" font-size="11.5" fill="#333" text-anchor="middle">16,635</text><line x1="1246.0" y1="789" x2="1246.0" y2="996" stroke="#d6d6d6" stroke-width="1" stroke-dasharray="3 3"/><text x="1246.0" y="1010" font-family="Liberation Sans" font-size="11.5" fill="#333" text-anchor="middle">17,135</text><line x1="1331.2" y1="789" x2="1331.2" y2="996" stroke="#d6d6d6" stroke-width="1" stroke-dasharray="3 3"/><text x="1331.2" y="1010" font-family="Liberation Sans" font-size="11.5" fill="#333" text-anchor="middle">17,635</text><line x1="1416.3" y1="789" x2="1416.3" y2="996" stroke="#d6d6d6" stroke-width="1" stroke-dasharray="3 3"/><text x="1416.3" y="1010" font-family="Liberation Sans" font-size="11.5" fill="#333" text-anchor="middle">18,135</text><line x1="1501.5" y1="789" x2="1501.5" y2="996" stroke="#d6d6d6" stroke-width="1" stroke-dasharray="3 3"/><text x="1501.5" y="1010" font-family="Liberation Sans" font-size="11.5" fill="#333" text-anchor="middle">18,635</text><line x1="1586.6" y1="789" x2="1586.6" y2="996" stroke="#d6d6d6" stroke-width="1" stroke-dasharray="3 3"/><text x="1586.6" y="1010" font-family="Liberation Sans" font-size="11.5" fill="#333" text-anchor="middle">19,135</text><line x1="1671.8" y1="789" x2="1671.8" y2="996" stroke="#d6d6d6" stroke-width="1" stroke-dasharray="3 3"/><text x="1671.8" y="1010" font-family="Liberation Sans" font-size="11.5" fill="#333" text-anchor="middle">19,635</text><line x1="1756.9" y1="789" x2="1756.9" y2="996" stroke="#d6d6d6" stroke-width="1" stroke-dasharray="3 3"/><text x="1756.9" y="1010" font-family="Liberation Sans" font-size="11.5" fill="#333" text-anchor="middle">20,135</text><line x1="139.5" y1="830.4" x2="1841.5" y2="830.4" stroke="#d6d6d6" stroke-width="1" stroke-dasharray="3 3"/><line x1="139.5" y1="871.9" x2="1841.5" y2="871.9" stroke="#d6d6d6" stroke-width="1" stroke-dasharray="3 3"/><line x1="139.5" y1="914.2" x2="1841.5" y2="914.2" stroke="#d6d6d6" stroke-width="1" stroke-dasharray="3 3"/><line x1="139.5" y1="955.4" x2="1841.5" y2="955.4" stroke="#d6d6d6" stroke-width="1" stroke-dasharray="3 3"/><text x="136" y="832.8" font-family="Liberation Sans" font-size="10" fill="#ff2a2a" text-anchor="end">45 V</text><text x="136" y="874.3" font-family="Liberation Sans" font-size="10" fill="#ff2a2a" text-anchor="end">34 V</text><text x="136" y="915.8" font-family="Liberation Sans" font-size="10" fill="#ff2a2a" text-anchor="end">23 V</text><text x="136" y="957.3" font-family="Liberation Sans" font-size="10" fill="#ff2a2a" text-anchor="end">11 V</text><text x="136" y="999.8" font-family="Liberation Sans" font-size="10" fill="#ff2a2a" text-anchor="end">0 V</text><text x="1843.5" y="791.8" font-family="Liberation Sans" font-size="10" fill="#2a2aff">6720 mA</text><text x="1843.5" y="832.8" font-family="Liberation Sans" font-size="10" fill="#2a2aff">5376 mA</text><text x="1843.5" y="874.3" font-family="Liberation Sans" font-size="10" fill="#2a2aff">4032 mA</text><text x="1843.5" y="915.8" font-family="Liberation Sans" font-size="10" fill="#2a2aff">2688 mA</text><text x="1843.5" y="957.3" font-family="Liberation Sans" font-size="10" fill="#2a2aff">1344 mA</text><text x="1843.5" y="999.8" font-family="Liberation Sans" font-size="10" fill="#2a2aff">0 mA</text><line x1="139.5" y1="789" x2="139.5" y2="996" stroke="#ff3030" stroke-width="1.3"/><line x1="1842.1" y1="789" x2="1842.1" y2="996" stroke="#0000ff" stroke-width="1.6"/><line x1="139.5" y1="996.5" x2="1841.5" y2="996.5" stroke="#e0e0e0" stroke-width="1"/><path d="M139.5 995.8H798M923 995.8H1529" stroke="#f0b060" stroke-width="1.6" fill="none"/><path d="M1529 995.8H1841.5" stroke="#c0a080" stroke-width="1.6" fill="none"/><path d="M139.5 991.5 L141.5 991.3 L143.5 991.3 L145.5 991.3 L147.5 992.0 L149.5 991.3 L151.5 991.3 L153.5 992.0 L155.5 991.3 L157.5 991.3 L159.5 992.0 L161.5 991.3 L163.5 992.0 L165.5 991.3 L167.5 991.3 L169.5 991.3 L171.5 991.3 L173.5 991.3 L175.5 991.3 L177.5 991.3 L179.5 991.3 L181.5 992.0 L183.5 991.3 L185.5 991.3 L187.5 992.0 L189.5 991.3 L191.5 991.3 L193.5 992.0 L195.5 992.0 L197.5 992.0 L199.5 991.3 L201.5 992.0 L203.5 992.0 L205.5 991.3 L207.5 991.3 L209.5 991.3 L211.5 991.3 L213.5 992.0 L215.5 991.3 L217.5 991.3 L219.5 991.3 L221.5 991.3 L223.5 992.0 L225.5 991.3 L227.5 992.0 L229.5 991.3 L231.5 992.0 L233.5 992.0 L235.5 991.3 L237.5 991.3 L239.5 992.0 L241.5 992.0 L243.5 992.0 L245.5 991.3 L247.5 991.3 L249.5 991.3 L251.5 992.0 L253.5 992.0 L255.5 991.3 L257.5 992.0 L259.5 991.3 L261.5 992.0 L263.5 991.3 L265.5 991.3 L267.5 992.0 L269.5 992.0 L271.5 991.3 L273.5 991.3 L275.5 991.3 L277.5 992.0 L279.5 991.3 L281.5 991.3 L283.5 991.3 L285.5 991.3 L287.5 991.3 L289.5 992.0 L291.5 991.3 L293.5 991.3 L295.5 992.0 L297.5 991.3 L299.5 992.0 L301.5 991.3 L303.5 991.3 L305.5 992.0 L307.5 991.3 L309.5 991.3 L311.5 992.0 L313.5 991.3 L315.5 991.3 L317.5 992.0 L319.5 991.3 L321.5 991.3 L323.5 991.3 L325.5 991.3 L327.5 991.3 L329.5 991.3 L331.5 991.3 L333.5 992.0 L335.5 991.3 L337.5 992.0 L339.5 992.0 L341.5 991.3 L343.5 991.3 L345.5 992.0 L347.5 991.3 L349.5 992.0 L351.5 991.3 L353.5 992.0 L355.5 991.3 L357.5 991.3 L359.5 991.3 L361.5 991.3 L363.5 991.3 L365.5 992.0 L367.5 992.0 L369.5 991.3 L371.5 991.3 L373.5 992.0 L375.5 992.0 L377.5 991.3 L379.5 992.0 L381.5 992.0 L383.5 992.0 L385.5 991.3 L387.5 991.3 L389.5 992.0 L391.5 991.3 L393.5 992.0 L395.5 991.3 L397.5 991.3 L399.5 991.3 L401.5 991.3 L403.5 991.3 L405.5 992.0 L407.5 991.3 L409.5 991.3 L411.5 991.3 L413.5 991.3 L415.5 991.3 L417.5 991.3 L419.5 992.0 L421.5 991.3 L423.5 991.3 L425.5 991.3 L427.5 991.3 L429.5 991.3 L431.5 991.3 L433.5 991.3 L435.5 991.3 L437.5 992.0 L439.5 991.3 L441.5 991.3 L443.5 991.3 L445.5 992.0 L447.5 991.3 L449.5 992.0 L451.5 991.3 L453.5 991.3 L455.5 992.0 L457.5 991.3 L459.5 991.3 L461.5 991.3 L463.5 991.3 L465.5 991.3 L467.5 991.3 L469.5 991.3 L471.5 992.0 L473.5 991.3 L475.5 991.3 L477.5 991.3 L479.5 992.0 L481.5 991.3 L483.5 991.3 L485.5 991.3 L487.5 991.3 L489.5 991.3 L491.5 991.3 L493.5 992.0 L495.5 991.3 L497.5 992.0 L499.5 992.0 L501.5 991.3 L503.5 991.3 L505.5 992.0 L507.5 992.0 L509.5 992.0 L511.5 992.0 L513.5 992.0 L515.5 992.0 L517.5 991.3 L519.5 991.3 L521.5 992.0 L523.5 992.0 L525.5 991.3 L527.5 991.3 L529.5 991.3 L531.5 991.3 L533.5 991.3 L535.5 991.3 L537.5 992.0 L539.5 991.3 L541.5 991.3 L543.5 991.3 L545.5 991.3 L547.5 991.3 L549.5 991.3 L551.5 991.3 L553.5 991.3 L555.5 991.3 L557.5 992.0 L559.5 991.3 L561.5 991.3 L563.5 991.3 L565.5 992.0 L567.5 991.3 L569.5 992.0 L571.5 991.3 L573.5 991.3 L575.5 992.0 L577.5 991.3 L579.5 991.3 L581.5 991.3 L583.5 992.0 L585.5 991.3 L587.5 991.3 L589.5 992.0 L591.5 991.3 L593.5 991.3 L595.5 992.0 L597.5 991.3 L599.5 991.3 L601.5 991.3 L603.5 991.3 L605.5 991.3 L607.5 991.3 L609.5 991.3 L611.5 991.3 L613.5 991.3 L615.5 991.3 L617.5 991.3 L619.5 991.3 L621.5 992.0 L623.5 991.3 L625.5 992.0 L627.5 991.3 L629.5 991.3 L631.5 992.0 L633.5 991.3 L635.5 992.0 L637.5 991.3 L639.5 991.3 L641.5 992.0 L643.5 991.3 L645.5 991.3 L647.5 992.0 L649.5 992.0 L651.5 991.3 L653.5 992.0 L655.5 991.3 L657.5 992.0 L659.5 991.3 L661.5 992.0 L663.5 991.3 L665.5 992.0 L667.5 991.3 L669.5 991.3 L671.5 991.3 L673.5 991.3 L675.5 992.0 L677.5 992.0 L679.5 992.0 L681.5 991.3 L683.5 992.0 L685.5 991.3 L687.5 992.0 L689.5 991.3 L691.5 991.3 L693.5 991.3 L695.5 992.0 L697.5 991.3 L699.5 991.3 L701.5 992.0 L703.5 991.3 L705.5 991.3 L707.5 992.0 L709.5 991.3 L711.5 991.3 L713.5 991.3 L715.5 991.3 L717.5 991.3 L719.5 991.3 L721.5 992.0 L723.5 992.0 L725.5 991.3 L727.5 991.3 L729.5 992.0 L731.5 991.3 L733.5 991.3 L735.5 991.3 L737.5 991.3 L739.5 991.3 L741.5 991.3 L743.5 991.3 L745.5 991.3 L747.5 991.3 L749.5 991.3 L751.5 991.3 L753.5 992.0 L755.5 992.0 L757.5 991.3 L759.5 991.3 L761.5 992.0 L763.5 991.3 L765.5 992.0 L767.5 991.3 L769.5 992.0 L771.5 991.3 L773.5 991.3 L775.5 992.0 L777.5 991.3 L779.5 991.3 L781.5 991.3 L783.5 991.3 L785.5 992.0 L787.5 991.3 L789.5 991.3 L791.5 992.0 L793.5 991.3 L795.5 991.3 L797.5 991.3 L799 996L803 993.8H923" stroke="#229922" stroke-width="1.3" fill="none"/><path d="M923 996Q923 991 926 991H1148L1148.7 995.5L1149.5 991H1841" stroke="#44b044" stroke-width="1.1" fill="none"/><path d="M1226 990.5v3M1305 990.5v5.5M930 991.5v1.5" stroke="#1a901a" stroke-width="1.5"/><path d="M1539 990v6" stroke="#1a8a1a" stroke-width="2"/><path d="M140 978.75H812L812.6 973.1H815.0L815.6 967.4H818.0L818.6 961.8H821.0L821.6 956.1H824.0L824.6 950.5H827.0L827.6 944.8H830.0L830.6 939.1H832.9L833.5 933.5H835.9L836.5 927.8H838.9L839.5 922.2H841.9L842.5 916.5H844.9L845.5 910.8H847.9L848.5 905.2H850.9L851.5 899.5H853.9L854.5 893.9H856.9L857.5 888.2H859.9L860.5 882.5H862.9L863.5 876.9H865.9L866.5 871.2H868.9L869.5 865.6H871.9L872.5 859.9H874.8L875.4 854.3H877.8L878.4 848.6H880.8L881.4 842.9H883.8L884.4 837.3H886.8L887.4 831.6H889.8L890.4 826.0H892.8L893.4 820.3H895.8H1529L1530 821.3H1841" stroke="#ff2828" stroke-width="1.15" fill="none"/><path d="M1529.5 996V981.2H1531.5V884.6H1533V837.2H1540V836.2H1688V835.4H1708L1709 836.5L1710 835.4H1841" stroke="#2a9cf0" stroke-width="1.4" fill="none"/><line x1="802.5" y1="789" x2="802.5" y2="996" stroke="#22e622" stroke-width="2.2" stroke-dasharray="5 2.5"/></svg>
<div class="abs" style="left:0;top:1020px;width:1920px;height:1px;background:#a0a0a0"></div>
<div class="abs" style="left:1px;top:1021px;width:1917px;height:21px;background:linear-gradient(#f9f9f9,#f3f3f3)"></div>
<div class="abs" style="left:0;top:1042px;width:1920px;height:1px;background:#3a3a3a"></div>
<div class="st" style="left:7px">Ready</div>
<div class="st" style="left:134px">[VBUS]</div>
<div class="st" style="left:416.3px">[CC1 / CC2]</div>
<div class="st" style="left:648.4px">[Voltage]</div>
<div class="st" style="left:915px">[Logic]</div>
<div class="sep" style="left:125px;top:1025px;height:15px;background:#d8d8d8"></div>
<div class="sep" style="left:407.8px;top:1025px;height:15px;background:#d8d8d8"></div>
<div class="sep" style="left:640.7px;top:1025px;height:15px;background:#d8d8d8"></div>
<div class="sep" style="left:906.5px;top:1025px;height:15px;background:#d8d8d8"></div>
<div class="sep" style="left:1130px;top:1025px;height:15px;background:#d8d8d8"></div>
</body></html>
